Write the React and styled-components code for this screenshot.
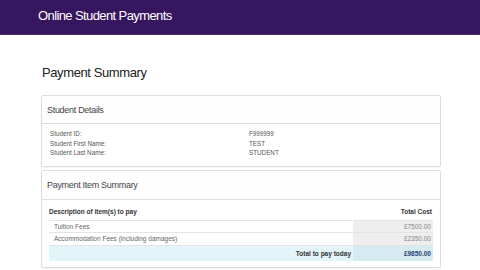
import { Fragment } from 'react';
import styled, { createGlobalStyle } from 'styled-components';

const GlobalStyle = createGlobalStyle`
  body {
    margin: 0;
    background: #fff;
    font-family: "Liberation Sans", Arial, sans-serif;
    color: #444;
  }
`;

const TopBar = styled.header`
  height: 35px;
  box-sizing: border-box;
  background: #371660;
  border-bottom: 1px solid #4a2a72;
  padding: 8px 0 0 38px;
  color: #fff;
  font-size: 13px;
  letter-spacing: -0.6px;
`;

const Main = styled.main`
  padding: 0 39px 0 41px;
`;

const PageTitle = styled.h1`
  margin: 30px 0 15px 1px;
  font-size: 13px;
  font-weight: normal;
  color: #222;
  letter-spacing: -0.4px;
`;

const Panel = styled.section`
  border: 1px solid #ddd;
  border-radius: 2px;
  margin-bottom: 3px;
  box-shadow: 0 1px 1px rgba(0, 0, 0, 0.04);
`;

const PanelHeading = styled.div`
  height: ${(p) => p.$h || 28}px;
  box-sizing: border-box;
  display: flex;
  align-items: center;
  padding: 0 5px;
  font-size: 9px;
  letter-spacing: -0.3px;
  color: #444;
  background: #fefefe;
  border-bottom: 1px solid #ddd;
`;

const PanelBody = styled.div`
  padding: ${(p) => p.$pad || '5px 7px 8px 8px'};
`;

const DetailGrid = styled.div`
  display: grid;
  grid-template-columns: 199px 1fr;
  font-size: 6.3px;
  line-height: 9.5px;
  color: #555;
`;

const Table = styled.table`
  width: 100%;
  border-collapse: collapse;
  font-size: 6.5px;
  color: #555;
`;

const Th = styled.th`
  text-align: ${(p) => (p.$right ? 'right' : 'left')};
  font-weight: bold;
  color: #333;
  padding: 8px 1px 4px 0;
  height: 8px;
`;

const Td = styled.td`
  border-top: 1px solid #e4e4e4;
  padding: 0 ${(p) => (p.$right ? '2px' : '0')} 0 ${(p) => (p.$right ? '0' : '5px')};
  height: ${(p) => p.$h || 11}px;
  text-align: ${(p) => (p.$right ? 'right' : 'left')};
  background: ${(p) => p.$bg || 'transparent'};
  color: ${(p) => p.$color || '#666'};
  font-weight: ${(p) => (p.$bold ? 'bold' : 'normal')};
  width: ${(p) => (p.$w ? `${p.$w}px` : 'auto')};
`;

const details = [
  ['Student ID:', 'F999999'],
  ['Student First Name:', 'TEST'],
  ['Student Last Name:', 'STUDENT'],
];

const items = [
  ['Tuition Fees', '£7500.00', 11],
  ['Accommodation Fees (including damages)', '£2350.00', 12],
];

export default function App() {
  return (
    <>
      <GlobalStyle />
      <TopBar>Online Student Payments</TopBar>
      <Main>
        <PageTitle>Payment Summary</PageTitle>
        <Panel>
          <PanelHeading>Student Details</PanelHeading>
          <PanelBody>
            <DetailGrid>
              {details.map(([k, v]) => (
                <Fragment key={k}>
                  <span>{k}</span>
                  <span>{v}</span>
                </Fragment>
              ))}
            </DetailGrid>
          </PanelBody>
        </Panel>
        <Panel>
          <PanelHeading $h={29}>Payment Item Summary</PanelHeading>
          <PanelBody $pad="0 7px 6px 7px">
            <Table>
              <thead>
                <tr>
                  <Th>Description of item(s) to pay</Th>
                  <Th $right>Total Cost</Th>
                </tr>
              </thead>
              <tbody>
                {items.map(([name, cost, h]) => (
                  <tr key={name}>
                    <Td $h={h}>{name}</Td>
                    <Td $right $w={78} $bg="#eeeeee" $color="#888">{cost}</Td>
                  </tr>
                ))}
                <tr>
                  <Td $h={15} $right $bg="#e4f5f9" $bold $color="#333">
                    Total to pay today
                  </Td>
                  <Td $h={15} $right $bg="#d6ebf1" $bold $color="#1f3f73">£9850.00</Td>
                </tr>
              </tbody>
            </Table>
          </PanelBody>
        </Panel>
      </Main>
    </>
  );
}
